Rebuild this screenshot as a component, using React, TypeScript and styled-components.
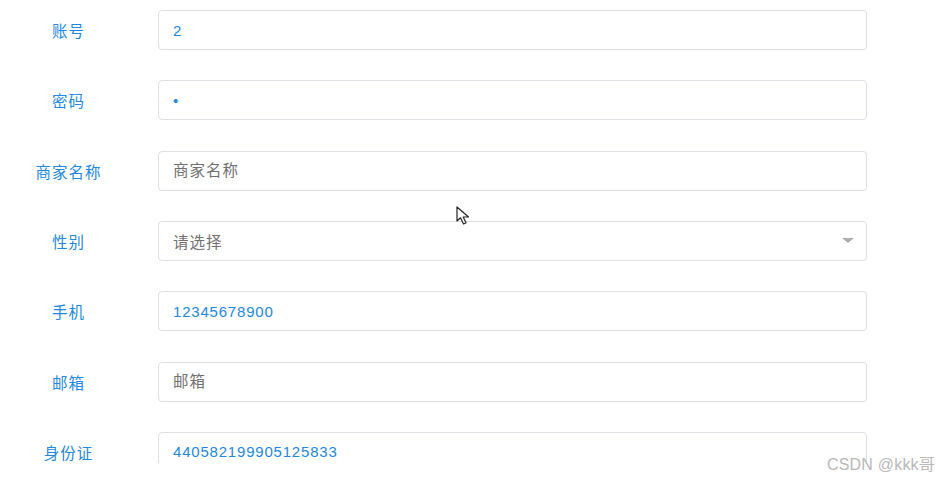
import React from "react";
import styled, { createGlobalStyle } from "styled-components";

const Global = createGlobalStyle`
  html, body { margin: 0; padding: 0; background: #fff; }
  body { font-family: "Liberation Sans", "Noto Sans CJK SC", sans-serif; }
`;

const Page = styled.div`
  position: relative;
  width: 940px;
  height: 478px;
  background: #fff;
`;

const Form = styled.div`
  height: 463px;
  overflow: hidden;
  padding-top: 10px;
  box-sizing: border-box;
  display: flex;
  flex-direction: column;
  gap: 30.33px;
`;

const Row = styled.div`
  display: flex;
  align-items: center;
  height: 40px;
  flex: 0 0 40px;
`;

const Label = styled.label`
  width: 137px;
  margin-right: 21px;
  text-align: center;
  font-size: 15.5px;
  letter-spacing: 1px;
  color: #2388dd;
  white-space: nowrap;
`;

const Input = styled.input`
  width: 709px;
  height: 40px;
  box-sizing: border-box;
  border: 1px solid #dcdfe3;
  border-radius: 4px;
  padding: 0 14px;
  font-family: "Liberation Sans", "Noto Sans CJK SC", sans-serif;
  font-size: 15px;
  letter-spacing: 0.8px;
  color: #2388dd;
  outline: none;
  background: #fff;
  &::placeholder {
    color: #707070;
    font-size: 15.5px;
    letter-spacing: 1px;
  }
`;

const SelectBox = styled.div`
  position: relative;
  width: 709px;
  height: 40px;
  box-sizing: border-box;
  border: 1px solid #dcdfe3;
  border-radius: 4px;
  padding: 0 12px 0 14px;
  display: flex;
  align-items: center;
  font-size: 15.5px;
  letter-spacing: 1px;
  color: #707070;
`;

const Arrow = styled.span`
  margin-left: auto;
  width: 0;
  height: 0;
  border-left: 6.5px solid transparent;
  border-right: 6.5px solid transparent;
  border-top: 5px solid #aeaeae;
`;

const Watermark = styled.div`
  position: absolute;
  right: 5px;
  top: 451px;
  font-size: 16px;
  color: #b8b8b8;
  font-family: "Liberation Sans", "Noto Sans CJK SC", sans-serif;
  letter-spacing: 0.2px;
  white-space: nowrap;
`;

const Cursor = styled.svg`
  position: absolute;
  left: 456px;
  top: 206px;
`;

export default function App() {
  return (
    <Page>
      <Global />
      <Form>
        <Row>
          <Label>账号</Label>
          <Input readOnly value="2" />
        </Row>
        <Row>
          <Label>密码</Label>
          <Input readOnly type="password" value="1" />
        </Row>
        <Row>
          <Label>商家名称</Label>
          <Input readOnly placeholder="商家名称" />
        </Row>
        <Row>
          <Label>性别</Label>
          <SelectBox>
            请选择
            <Arrow />
          </SelectBox>
        </Row>
        <Row>
          <Label>手机</Label>
          <Input readOnly value="12345678900" />
        </Row>
        <Row>
          <Label>邮箱</Label>
          <Input readOnly placeholder="邮箱" />
        </Row>
        <Row>
          <Label>身份证</Label>
          <Input readOnly value="440582199905125833" />
        </Row>
      </Form>
      <Cursor width="16" height="20" viewBox="0 0 16 20">
        <path
          d="M1 1 L1 15 L4.5 11.8 L7.5 18 L10 16.8 L7.2 11 L12.5 11 Z"
          fill="#fff"
          stroke="#222"
          strokeWidth="1.2"
          strokeLinejoin="round"
        />
      </Cursor>
      <Watermark>CSDN @kkk哥</Watermark>
    </Page>
  );
}
